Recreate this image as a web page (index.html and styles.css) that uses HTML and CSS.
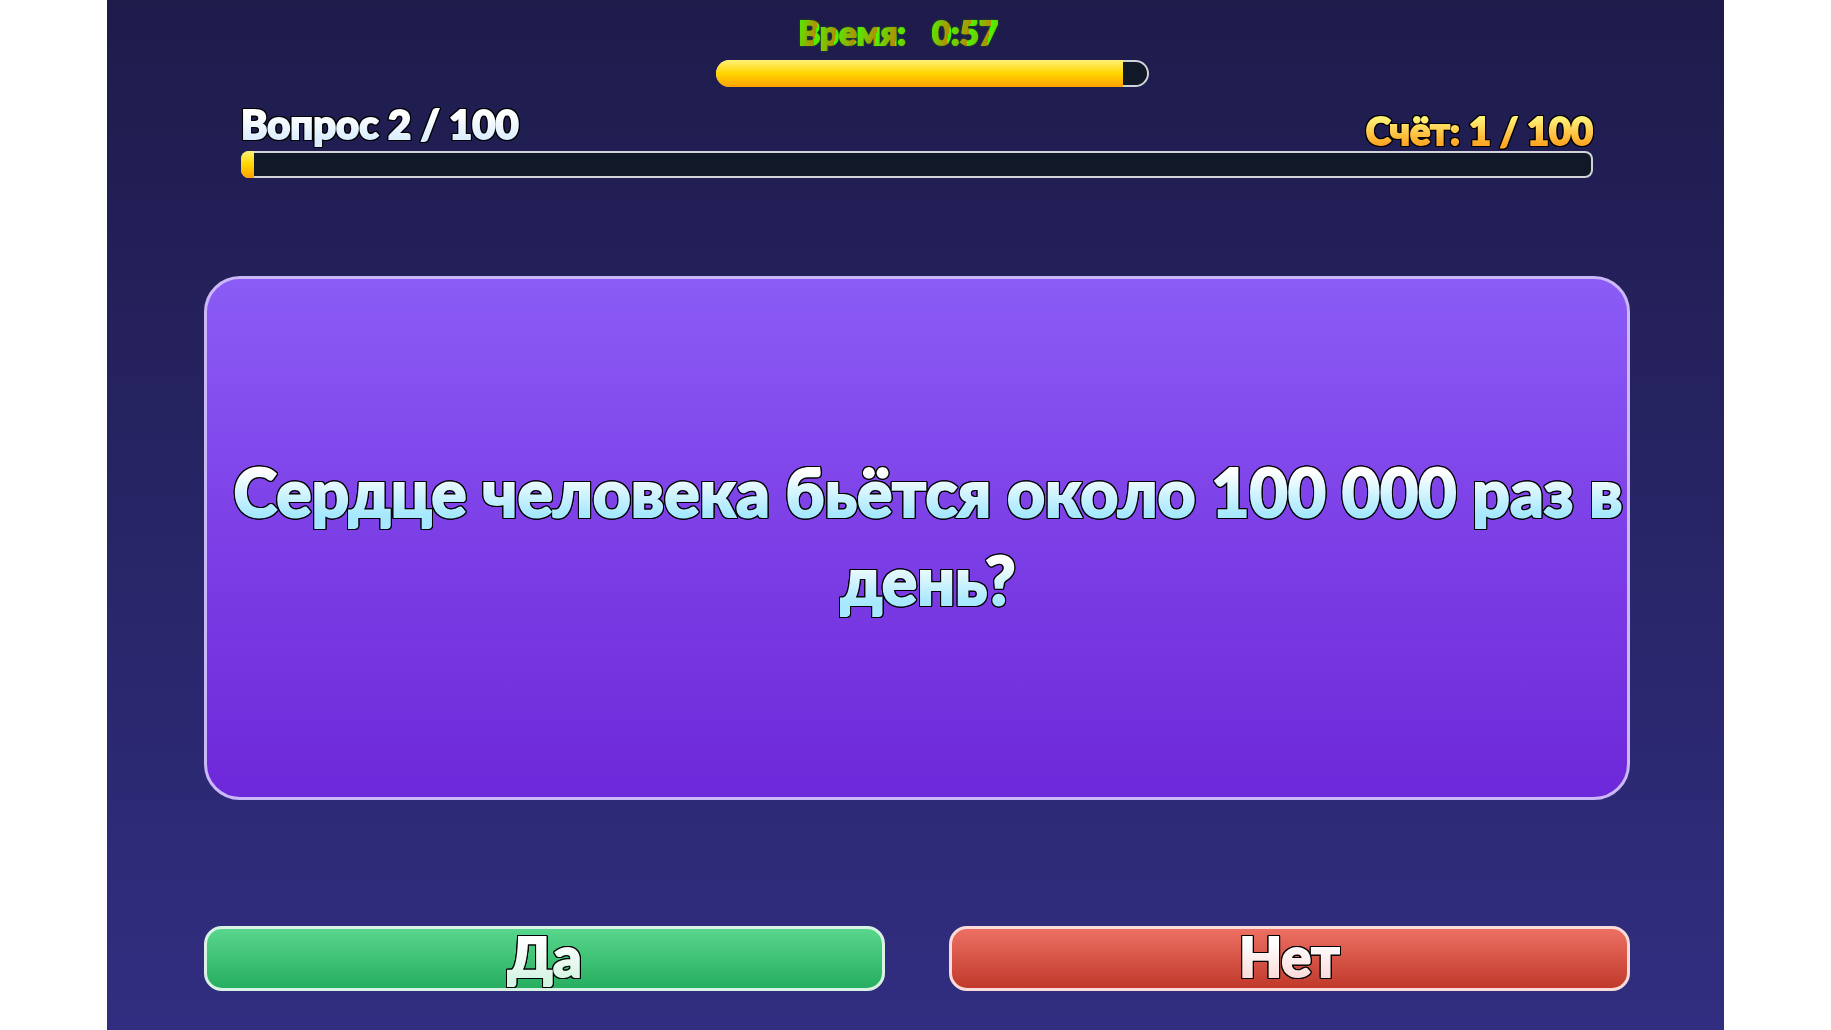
FILE: index.html
```
<!DOCTYPE html>
<html lang="ru">
    <head>
        <meta charset="UTF-8">
        <meta name="viewport" content="width=device-width, initial-scale=1">
        <title>Викторина</title>
        <link rel="stylesheet" href="styles.css">
    </head>
    <body>
        <main id="game">
            <div id="timer-section">
                <div class="timer-text"><span>Время:</span><span>0:57</span></div>
                <div class="bar timer-bar">
                    <div class="bar-fill" style="width: 94%"></div>
                </div>
            </div>
            <div id="progress-section">
                <div class="labels">
                    <div class="label question-label"><span>Вопрос 2 / 100</span></div>
                    <div class="label score-label"><span>Счёт: 1 / 100</span></div>
                </div>
                <div class="bar">
                    <div class="bar-fill" style="width: 1%"></div>
                </div>
            </div>
            <div id="question-card">
                <p class="question"><span>Сердце человека бьётся около 100 000 раз в день?</span></p>
            </div>
            <div id="button-section">
                <button class="answer yes" type="button"><span>Да</span></button>
                <button class="answer no" type="button"><span>Нет</span></button>
            </div>
        </main>
    </body>
</html>
```
FILE: styles.css
```
* {
    box-sizing: border-box;
}
body {
    margin: 0;
    background: #fff;
    font-family: "Lato", "Open Sans", sans-serif;
    font-weight: 900;
}
#game {
    display: flex;
    flex-direction: column;
    aspect-ratio: 157 / 100;
    height: 100vh;
    margin: 0 auto;
    padding: 12px 94px 39px 97px;
    background: linear-gradient(#1e1b4b, #312e81);
}

/* gradient letters, the parent draws the dark outline */
.timer-text span,
.label span,
.question span,
.answer span {
    -webkit-background-clip: text;
    background-clip: text;
    color: transparent;
    -webkit-text-stroke: 2px transparent;
}
.label,
.question,
.answer span {
    filter: drop-shadow(1px 0 #000) drop-shadow(-1px 0 #000) drop-shadow(0 1px #000) drop-shadow(0 -1px #000);
}

/* timer */
#timer-section {
    align-self: center;
    width: 463px;
    padding-left: 30px;
}
.timer-text {
    display: flex;
    gap: 26px;
    height: 48px;
    padding-left: 83px;
    font-size: 33px;
    line-height: 40px;
    filter: drop-shadow(0 0 1px #1f5a14);
}
.timer-text span {
    background-image: repeating-linear-gradient(100deg, #46f800 0, #b88a00 20px);
}

/* bars */
.bar {
    height: 27px;
    overflow: hidden;
    border-radius: 8px;
    background: #111827;
    box-shadow: inset 0 0 0 2px #d1d3d8;
}
.timer-bar {
    border-radius: 14px;
}
.bar-fill {
    height: 100%;
    background: linear-gradient(#fff176, #ffd600 50%, #ffa000);
}

/* question number and score */
#progress-section {
    margin: 12px 37px 0;
}
.labels {
    display: flex;
    justify-content: space-between;
    height: 52px;
}
.label {
    font-size: 40px;
    line-height: 50px;
    white-space: nowrap;
}
.question-label span {
    background-image: linear-gradient(#fff 30%, #dbeefe 80%);
}
.score-label {
    padding-top: 6px;
    font-size: 38px;
}
.score-label span {
    background-image: linear-gradient(#fff176 25%, #ffa726 80%);
}

/* card */
#question-card {
    display: flex;
    flex: 1;
    align-items: center;
    margin: 98px 0 126px;
    padding: 0 0 4px 22px;
    border: 3px solid #cbb8f8;
    border-radius: 36px;
    background: linear-gradient(#8b5cf6, #7c3fe6 50%, #6d28d9) border-box;
}
.question {
    flex: 1;
    margin: 0;
    font-size: 66px;
    line-height: 88px;
    text-align: center;
}
.question span {
    background-image: linear-gradient(#fff 25%, #a5e8ff 80%);
    -webkit-box-decoration-break: clone;
    box-decoration-break: clone;
}

/* answers */
#button-section {
    display: grid;
    flex: none;
    grid-template-columns: 1fr 1fr;
    gap: 64px;
}
.answer {
    height: 65px;
    padding: 0 0 6px;
    border: 3px solid;
    border-radius: 18px;
    font-family: inherit;
    font-size: 56px;
    font-weight: 900;
    line-height: 52px;
    cursor: pointer;
}
.yes {
    border-color: #d8f3e3;
    background: linear-gradient(#58d68d, #27ae60);
}
.no {
    border-color: #f9dcd9;
    background: linear-gradient(#ec7063, #c0392b);
}
.yes span {
    background-image: linear-gradient(#fff 30%, #d5f5e3 85%);
}
.no span {
    background-image: linear-gradient(#fff 30%, #fadbd8 85%);
}
```
